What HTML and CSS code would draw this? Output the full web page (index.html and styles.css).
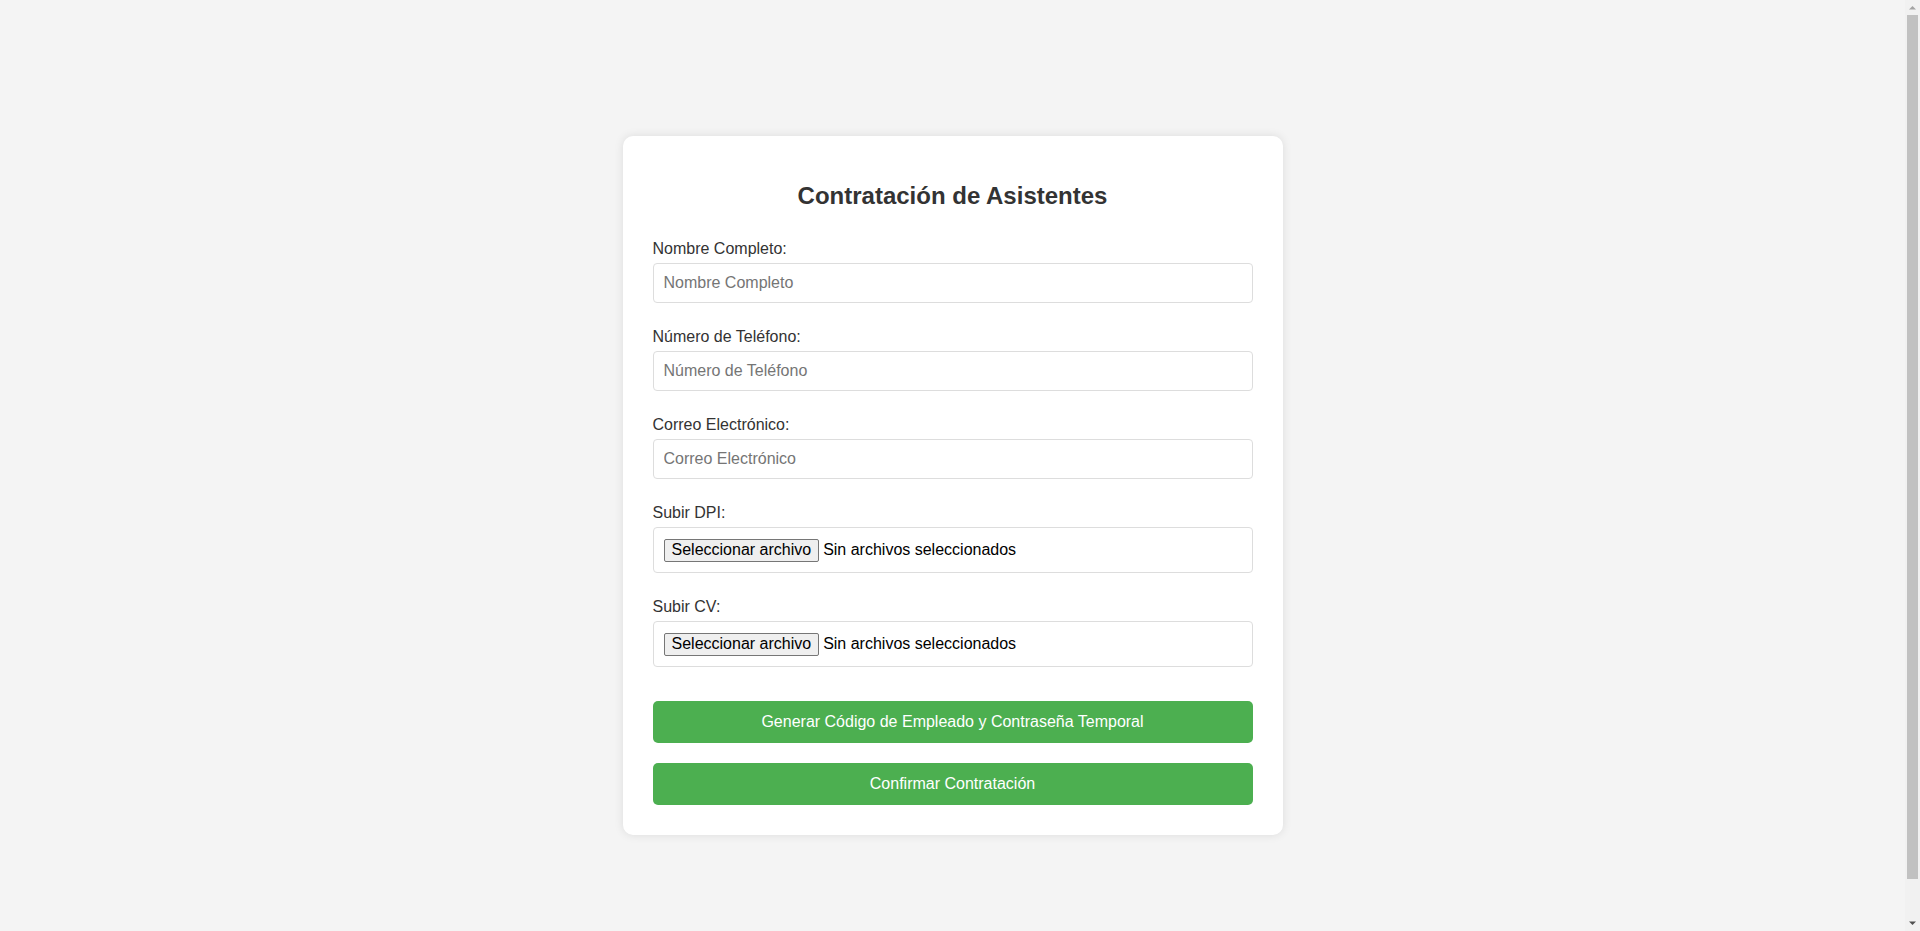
FILE: index.html
```html
<!DOCTYPE html>
<html lang="es">
<head>
<meta charset="UTF-8">
<title>Contratación de Asistentes</title>
<link rel="stylesheet" href="styles.css">
</head>
<body>
<div class="card">
  <h1 class="title">Contratación de Asistentes</h1>
  <form class="form">
    <div class="group">
      <label class="label" for="nombre">Nombre Completo:</label>
      <input class="field" id="nombre" type="text" placeholder="Nombre Completo">
    </div>
    <div class="group">
      <label class="label" for="tel">Número de Teléfono:</label>
      <input class="field" id="tel" type="text" placeholder="Número de Teléfono">
    </div>
    <div class="group">
      <label class="label" for="correo">Correo Electrónico:</label>
      <input class="field" id="correo" type="text" placeholder="Correo Electrónico">
    </div>
    <div class="group">
      <label class="label">Subir DPI:</label>
      <div class="file-box">
        <button type="button" class="file-btn">Seleccionar archivo</button><span class="file-text">Sin archivos seleccionados</span>
      </div>
    </div>
    <div class="group">
      <label class="label">Subir CV:</label>
      <div class="file-box">
        <button type="button" class="file-btn">Seleccionar archivo</button><span class="file-text">Sin archivos seleccionados</span>
      </div>
    </div>
    <div class="actions">
      <button type="button" class="btn">Generar Código de Empleado y Contraseña Temporal</button>
      <button type="button" class="btn">Confirmar Contratación</button>
    </div>
  </form>
</div>
<div class="scrollbar" aria-hidden="true">
  <div class="sb-btn sb-up"><svg width="15" height="15" viewBox="0 0 15 15"><path d="M4 9.5 L7.5 6 L11 9.5 Z" fill="#a3a3a3"/></svg></div>
  <div class="sb-track"><div class="sb-thumb"></div></div>
  <div class="sb-btn sb-down"><svg width="15" height="15" viewBox="0 0 15 15"><path d="M4 5.5 L7.5 9 L11 5.5 Z" fill="#505050"/></svg></div>
</div>
</body>
</html>
```

FILE: styles.css
```css
html, body {
  font-family: "Liberation Sans", Arial, sans-serif;
}

body {
  margin: 0;
  padding: 20px 35px 20px 20px;
  height: 100vh;
  background: #f4f4f4;
  display: flex;
  justify-content: center;
  align-items: center;
  color: #333;
}

.card {
  width: 600px;
  padding: 30px;
  background: #fff;
  border-radius: 10px;
  box-shadow: 0 0 10px rgba(0, 0, 0, 0.1);
}

.title {
  font-size: 24px;
  font-weight: bold;
  text-align: center;
  margin: 16px 0 30px;
  color: #333;
}

.form {
  margin: 0;
}

.group {
  margin-bottom: 25px;
}

.label {
  display: block;
  font-size: 16px;
  margin-bottom: 5px;
  color: #333;
}

.field {
  display: block;
  box-sizing: border-box;
  width: 100%;
  padding: 10px;
  font-family: "Liberation Sans", Arial, sans-serif;
  font-size: 16px;
  border: 1px solid #ddd;
  border-radius: 4px;
  background: #fff;
  color: #333;
  margin: 0;
}

.field::placeholder {
  color: #757575;
}

.file-box {
  box-sizing: border-box;
  width: 100%;
  height: 46px;
  padding: 0 10px;
  border: 1px solid #ddd;
  border-radius: 4px;
  display: flex;
  align-items: center;
  font-size: 16px;
  color: #000;
}

.file-btn {
  box-sizing: border-box;
  height: 23px;
  font-family: "Liberation Sans", Arial, sans-serif;
  font-size: 16px;
  padding: 0 7px;
  margin: 0 4px 0 0;
  background: #efefef;
  border: 1px solid #767676;
  border-radius: 2px;
  color: #000;
  line-height: normal;
}

.file-text {
  line-height: normal;
}

.actions {
  display: flex;
  flex-direction: column;
  gap: 20px;
  margin-top: 34px;
}

.btn {
  width: 100%;
  padding: 12px;
  font-family: "Liberation Sans", Arial, sans-serif;
  font-size: 16px;
  color: #fff;
  background: #4caf50;
  border: none;
  border-radius: 5px;
  line-height: normal;
}

.scrollbar {
  position: fixed;
  top: 0;
  right: 0;
  bottom: 0;
  width: 15px;
  background: #f1f1f1;
  display: flex;
  flex-direction: column;
}

.sb-btn {
  height: 15px;
  flex: none;
}

.sb-btn svg {
  display: block;
}

.sb-track {
  flex: 1;
  position: relative;
}

.sb-thumb {
  position: absolute;
  left: 2px;
  right: 2px;
  top: 0;
  height: 864px;
  background: #c1c1c1;
}
```
